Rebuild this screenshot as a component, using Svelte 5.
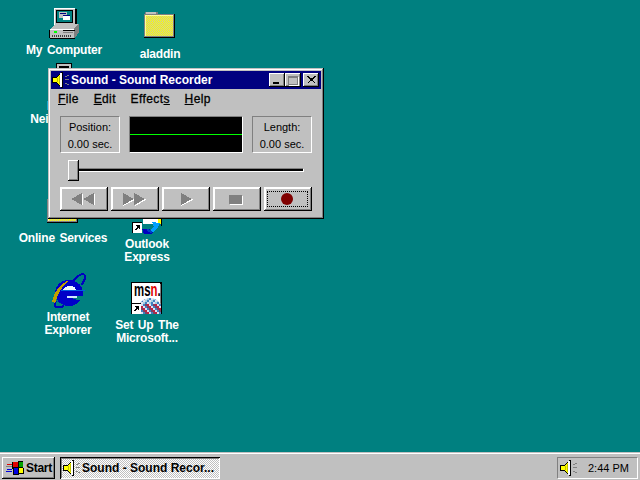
<script lang="ts">
  const icons = [
    { id: "computer", x: 24, y: 7, size: [32, 32], gap: 5, shift: 0, label: ["My Computer"] },
    { id: "folder", x: 120, y: 10, size: [34, 30], gap: 8, shift: 0, label: ["aladdin"] },
    { id: "network", x: 24, y: 62, size: [32, 32], gap: 6, shift: 6, label: ["Network", "Neighborhood"] },
    { id: "folder", x: 23, y: 195, size: [34, 30], gap: 7, shift: 0, label: ["Online Services"] },
    { id: "outlook", x: 107, y: 204, size: [32, 32], gap: 2, shift: 0, label: ["Outlook", "Express"] },
    { id: "ie", x: 28, y: 273, size: [36, 36], gap: 2, shift: 0, label: ["Internet", "Explorer"] },
    { id: "msn", x: 107, y: 281, size: [34, 34], gap: 4, shift: 0, label: ["Set Up The", "Microsoft..."] }
  ];

  const transport = [
    { id: "rewind", focus: false },
    { id: "forward", focus: false },
    { id: "play", focus: false },
    { id: "stop", focus: false },
    { id: "record", focus: true }
  ];

  const menus = [
    { before: "", key: "F", after: "ile" },
    { before: "", key: "E", after: "dit" },
    { before: "Effect", key: "s", after: "" },
    { before: "", key: "H", after: "elp" }
  ];

  // little coloured squares for the msn globe
  const mosaicColors = ["#4080c0", "#a0d0e0", "#e0e0f0", "#202080", "#c02040", "#208060", "#804060", "#6040a0"];
  const mosaic: { x: number; y: number; c: string }[] = [];
  for (let y = 17; y < 32; y += 2) {
    for (let x = 9; x < 31; x += 2) {
      const upper = y < 23;
      const n = (x * 7 + y * 13) % (upper ? 3 : 8);
      mosaic.push({ x, y, c: upper ? mosaicColors[n] : mosaicColors[(n + 2) % 8] });
    }
  }
</script>

{#snippet speaker()}
  <svg class="speaker" viewBox="0 0 18 16" shape-rendering="crispEdges" aria-hidden="true">
    <polygon points="0,5 4,5 9,0 11,0 11,16 9,16 4,11 0,11" fill="#000" />
    <polygon points="1,6 4,6 8,2 8,14 4,10 1,10" fill="#ffff00" />
    <rect x="5" y="6" width="1" height="4" fill="#c0c000" />
    <rect x="7" y="4" width="1" height="8" fill="#c0c000" />
    <rect x="8" y="1" width="2" height="14" fill="#fff" />
    <rect x="13" y="7" width="4" height="1" fill="#808080" />
    <rect x="13" y="4" width="2" height="1" fill="#808080" />
    <rect x="15" y="3" width="2" height="1" fill="#808080" />
    <rect x="13" y="11" width="2" height="1" fill="#808080" />
    <rect x="15" y="12" width="2" height="1" fill="#808080" />
  </svg>
{/snippet}

{#snippet shortcut(x: number, y: number)}
  <rect x={x} y={y} width="10" height="11" fill="#fff" />
  <rect x={x} y={y} width="10" height="1" fill="#000" />
  <rect x={x} y={y} width="1" height="11" fill="#000" />
  <polygon points={`${x + 3},${y + 3} ${x + 8},${y + 3} ${x + 8},${y + 8} ${x + 6},${y + 6} ${x + 4},${y + 9} ${x + 3},${y + 8} ${x + 5},${y + 5}`} fill="#000" />
{/snippet}

{#snippet icon(id: string, size: number[])}
  <svg width={size[0]} height={size[1]} viewBox={`0 0 ${size[0]} ${size[1]}`} shape-rendering="crispEdges" aria-hidden="true">
    <defs>
      <pattern id="dither" width="2" height="2" patternUnits="userSpaceOnUse">
        <rect width="2" height="2" fill="#ffff00" />
        <rect width="1" height="1" fill="#c8c8a0" />
        <rect x="1" y="1" width="1" height="1" fill="#c8c8a0" />
      </pattern>
      <clipPath id="dome"><circle cx="20" cy="29" r="12" /></clipPath>
    </defs>
    {#if id === "computer"}
      <rect x="7" y="2" width="22" height="17" fill="#000" />
      <rect x="6" y="1" width="21" height="17" fill="#c0c0c0" />
      <rect x="6" y="1" width="21" height="1" fill="#fff" />
      <rect x="6" y="1" width="1" height="17" fill="#fff" />
      <rect x="8" y="3" width="17" height="13" fill="#000" />
      <rect x="9" y="4" width="15" height="11" fill="#008080" />
      <rect x="11" y="5" width="8" height="6" fill="#c0c0c0" />
      <rect x="12" y="6" width="6" height="1" fill="#000080" />
      <rect x="15" y="8" width="7" height="5" fill="#fff" />
      <rect x="15" y="8" width="7" height="1" fill="#000080" />
      <polygon points="7,17 30,17 26,22 3,22" fill="#c0c0c0" />
      <polygon points="26,22 30,17 31,17 31,25 27,31 26,31" fill="#808080" />
      <rect x="2" y="22" width="24" height="9" fill="#c0c0c0" />
      <rect x="2" y="22" width="24" height="1" fill="#fff" />
      <rect x="2" y="31" width="25" height="1" fill="#000" />
      <rect x="1" y="23" width="1" height="8" fill="#000" />
      <rect x="6" y="24" width="3" height="2" fill="#00ff00" />
      <rect x="15" y="23" width="12" height="1" fill="#000" />
      <rect x="15" y="25" width="10" height="1" fill="#808080" />
      {#each [4, 6, 8, 10, 12, 14, 16, 18, 20, 22] as k}
        <rect x={k} y="28" width="1" height="2" fill="#404040" />
      {/each}
    {:else if id === "folder"}
      <rect x="2" y="2" width="13" height="3" fill="#808080" />
      <rect x="3" y="2" width="10" height="2" fill="#c0c0c0" />
      <rect x="1" y="4" width="31" height="24" fill="#000" />
      <rect x="1" y="4" width="30" height="23" fill="#808080" />
      <rect x="2" y="5" width="28" height="21" fill="url(#dither)" />
      <rect x="2" y="5" width="28" height="1" fill="#ffff99" />
      <rect x="2" y="5" width="1" height="21" fill="#ffff99" />
    {:else if id === "network"}
      <rect x="8" y="1" width="16" height="16" fill="#000" />
      <rect x="9" y="2" width="14" height="14" fill="#c0c0c0" />
      <rect x="11" y="4" width="10" height="3" fill="#000" />
    {:else if id === "outlook"}
      <rect x="12" y="15" width="16" height="5" fill="#fff" />
      <rect x="27" y="15" width="3" height="5" fill="#ffff00" />
      <rect x="30" y="15" width="1" height="7" fill="#000" />
      <polygon points="11,25 18,25 22,28 20,30 13,30" fill="#0000c0" />
      <polygon points="21,18 29,19 26,25 22,28 19,26 23,23" fill="#00a0ff" />
      <polygon points="16,25 19,26 22,28 20,29 16,27" fill="#0040c0" />
      {@render shortcut(1, 18)}
    {:else if id === "ie"}
      <path d="M23 8 C 29 1, 35 -1, 35 4 C 35 7, 33 10, 31 12" fill="none" stroke="#0000c0" stroke-width="2" />
      <path d="M6 28 C 2 34, 7 36, 14 33" fill="none" stroke="#0000c0" stroke-width="2" />
      <ellipse cx="19" cy="20" rx="14" ry="13" fill="#0000c8" />
      <path d="M2 29 C 4 19, 9 12, 17 8 L 18 9 C 12 13, 8 20, 5 30 Z" fill="#c0a000" />
      <path d="M13 17 C 14 12, 25 11, 26 17 Z" fill="#f0f8ff" />
      <rect x="11" y="17" width="24" height="1" fill="#0060e0" />
      <path d="M17 23 L 34 23 L 34 27 L 27 27 C 25 25, 20 25, 17 25 Z" fill="#008080" />
      <rect x="17" y="23" width="10" height="2" fill="#d0e8ff" />
    {:else if id === "msn"}
      <rect x="1" y="1" width="31" height="32" fill="#000" />
      <rect x="2" y="2" width="28" height="30" fill="#fff" />
      <rect x="30" y="3" width="1" height="29" fill="#808080" />
      <text class="msn-text" transform="translate(4 15) scale(.6 1)"><tspan fill="#000">ms</tspan><tspan fill="#e00000">n</tspan><tspan fill="#000">.</tspan></text>
      <g clip-path="url(#dome)">
        {#each mosaic as m}
          <rect x={m.x} y={m.y} width="2" height="2" fill={m.c} />
        {/each}
      </g>
      {@render shortcut(1, 22)}
    {/if}
  </svg>
{/snippet}

{#snippet glyph(id: string)}
  {#if id === "rewind"}
    <svg class="glyph nudge" width="24" height="13" viewBox="0 0 24 13" shape-rendering="crispEdges" aria-hidden="true">
      <polygon points="23,1 23,12 24,12 24,0" fill="#fff" />
      <polygon points="11,1 11,12 12,12 12,0" fill="#fff" />
      <polygon points="11,0 11,12 0,6" fill="#808080" />
      <polygon points="23,0 23,12 12,6" fill="#808080" />
    </svg>
  {:else if id === "forward"}
    <svg class="glyph nudge" width="24" height="13" viewBox="0 0 24 13" shape-rendering="crispEdges" aria-hidden="true">
      <polygon points="1,13 13,7 12,6 1,12" fill="#fff" />
      <polygon points="13,13 24,7 23,6 13,12" fill="#fff" />
      <polygon points="1,0 1,12 12,6" fill="#808080" />
      <polygon points="12,0 12,12 23,6" fill="#808080" />
    </svg>
  {:else if id === "play"}
    <svg class="glyph" width="13" height="13" viewBox="0 0 13 13" shape-rendering="crispEdges" aria-hidden="true">
      <polygon points="1,13 13,7 12,6 1,12" fill="#fff" />
      <polygon points="1,0 1,12 12,6" fill="#808080" />
    </svg>
  {:else if id === "stop"}
    <span class="stop-mark"></span>
  {:else}
    <span class="record-mark"></span>
  {/if}
{/snippet}

<div class="screen">
  <main class="desktop">
    {#each icons as item}
      <div class="desk-icon" style={`left:${item.x}px;top:${item.y}px;gap:${item.gap}px`}>
        {@render icon(item.id, item.size)}
        <span class="desk-label" style={`translate:${item.shift}px 0`}>
          {#each item.label as line}
            <span>{line}</span>
          {/each}
        </span>
      </div>
    {/each}

    <section class="window">
      <header class="titlebar">
        {@render speaker()}
        <span class="title">Sound - Sound Recorder</span>
        <div class="caption-buttons">
          <span class="caption-btn"><i class="min"></i></span>
          <span class="caption-btn disabled"><i class="max"></i></span>
          <span class="caption-btn close">
            <svg width="9" height="8" viewBox="0 0 9 8" shape-rendering="crispEdges" aria-hidden="true">
              <path d="M0 0h2v1h1v1h3v-1h1v-1h2v1h-1v1h-1v1h-1v2h1v1h1v1h1v0h-2v-1h-1v-1h-3v1h-1v1h-2v0h1v-1h1v-1h1v-2h-1v-1h-1v-1h-1z" fill="#000" />
            </svg>
          </span>
        </div>
      </header>

      <nav class="menubar">
        {#each menus as menu}
          <span class="menu-item">{menu.before}<u>{menu.key}</u>{menu.after}</span>
        {/each}
      </nav>

      <div class="readout">
        <div class="panel"><span>Position:</span><span>0.00 sec.</span></div>
        <div class="scope"><span class="trace"></span></div>
        <div class="panel"><span>Length:</span><span>0.00 sec.</span></div>
      </div>

      <div class="slider">
        <span class="thumb"></span>
        <span class="track"></span>
      </div>

      <div class="transport">
        {#each transport as btn}
          <button type="button" class="transport-btn" class:focused={btn.focus} aria-label={btn.id}>
            {@render glyph(btn.id)}
          </button>
        {/each}
      </div>
    </section>
  </main>

  <footer class="taskbar">
    <button type="button" class="start">
      <svg width="18" height="16" viewBox="0 0 18 16" shape-rendering="crispEdges" aria-hidden="true">
        <polygon points="6,2 17,1 18,14 7,15" fill="#000" />
        <rect x="7" y="2" width="5" height="5" fill="#e00000" />
        <rect x="13" y="2" width="4" height="5" fill="#00a000" />
        <rect x="8" y="8" width="4" height="6" fill="#0000e0" />
        <rect x="13" y="8" width="4" height="5" fill="#ffff00" />
        <rect x="1" y="4" width="5" height="1" fill="#e00000" />
        <rect x="0" y="6" width="6" height="1" fill="#808080" />
        <rect x="1" y="9" width="5" height="1" fill="#0000e0" />
        <rect x="0" y="11" width="6" height="1" fill="#0000e0" />
      </svg>
      <span>Start</span>
    </button>
    <button type="button" class="task">
      {@render speaker()}
      <span>Sound - Sound Recor...</span>
    </button>
    <div class="tray">
      {@render speaker()}
      <span class="clock">2:44 PM</span>
    </div>
  </footer>
</div>

<style>
  :global(body) {
    margin: 0;
    overflow: hidden;
  }

  .screen {
    display: flex;
    flex-direction: column;
    width: 640px;
    height: 480px;
    font-family: "Liberation Sans", Arial, sans-serif;
    font-size: 12px;
    color: #000;
    user-select: none;
  }

  .desktop {
    position: relative;
    flex: 1;
    background: #008080;
    overflow: hidden;
  }

  .desk-icon {
    position: absolute;
    width: 80px;
    display: flex;
    flex-direction: column;
    align-items: center;
  }

  .desk-icon svg {
    display: block;
    flex-shrink: 0;
    overflow: visible;
  }

  .desk-label {
    display: flex;
    flex-direction: column;
    align-items: center;
    color: #fff;
    font-weight: 700;
    font-size: 12px;
    line-height: 13px;
    letter-spacing: -0.2px;
    word-spacing: 1.5px;
    white-space: nowrap;
  }

  .msn-text {
    font-family: "Liberation Sans", Arial, sans-serif;
    font-weight: 700;
    font-size: 19px;
  }

  .window {
    position: absolute;
    left: 48px;
    top: 68px;
    box-sizing: border-box;
    width: 276px;
    height: 151px;
    display: flex;
    flex-direction: column;
    padding: 3px;
    background: #c0c0c0;
    box-shadow:
      inset -1px -1px #000,
      inset 1px 1px #c0c0c0,
      inset -2px -2px #808080,
      inset 2px 2px #fff;
  }

  .titlebar {
    display: flex;
    align-items: center;
    height: 18px;
    padding-left: 1px;
    background: #000080;
    color: #fff;
    font-weight: 700;
  }

  .speaker {
    width: 18px;
    height: 16px;
    flex-shrink: 0;
  }

  .title {
    margin-left: 1px;
    white-space: nowrap;
  }

  .caption-buttons {
    display: flex;
    margin-left: auto;
    margin-right: 2px;
  }

  .caption-btn {
    box-sizing: border-box;
    display: flex;
    align-items: center;
    justify-content: center;
    position: relative;
    width: 16px;
    height: 14px;
    background: #c0c0c0;
    box-shadow:
      inset -1px -1px #000,
      inset 1px 1px #fff,
      inset -2px -2px #808080;
  }

  .caption-btn.close {
    margin-left: 2px;
  }

  .min {
    position: absolute;
    left: 4px;
    bottom: 3px;
    width: 6px;
    height: 2px;
    background: #000;
  }

  .max {
    display: block;
    box-sizing: border-box;
    width: 10px;
    height: 9px;
    border: 1px solid #808080;
    border-top-width: 2px;
    box-shadow: 1px 1px #fff;
  }

  .menubar {
    display: flex;
    gap: 14.7px;
    height: 20px;
    align-items: center;
    padding: 0 0 0 7px;
    font-size: 12px;
    -webkit-text-stroke: 0.3px #000;
    letter-spacing: 0.4px;
  }

  .readout {
    display: flex;
    gap: 9px;
    margin: 7px 0 0 9px;
    width: 252px;
    height: 37px;
  }

  .panel {
    box-sizing: border-box;
    flex: 0 0 60px;
    display: flex;
    flex-direction: column;
    align-items: center;
    justify-content: center;
    gap: 4px;
    padding-top: 2px;
    border: 1px solid;
    border-color: #808080 #fff #fff #808080;
    font-size: 11px;
    line-height: 13px;
  }

  .scope {
    box-sizing: border-box;
    flex: 1;
    display: flex;
    align-items: center;
    background: #000;
    border: 1px solid;
    border-color: #808080 #fff #fff #808080;
  }

  .trace {
    display: block;
    width: 100%;
    height: 1px;
    background: #00ff00;
  }

  .slider {
    display: flex;
    margin: 7px 0 0 17px;
    height: 21px;
  }

  .thumb {
    box-sizing: border-box;
    flex: 0 0 11px;
    height: 21px;
    background: #c0c0c0;
    box-shadow:
      inset -1px -1px #000,
      inset 1px 1px #fff,
      inset -2px -2px #808080;
  }

  .track {
    box-sizing: border-box;
    width: 225px;
    height: 4px;
    margin-top: 8px;
    background: #000;
    border-top: 1px solid #808080;
    border-bottom: 1px solid #fff;
    border-right: 1px solid #fff;
  }

  .transport {
    display: flex;
    gap: 3px;
    margin: 6px 0 0 9px;
  }

  .transport-btn {
    box-sizing: border-box;
    display: flex;
    align-items: center;
    justify-content: center;
    position: relative;
    width: 48px;
    height: 24px;
    padding: 0;
    border: 0;
    background: #c0c0c0;
    box-shadow:
      inset -1px -1px #000,
      inset 1px 1px #fff,
      inset -2px -2px #808080,
      inset 2px 2px #fff;
  }

  .transport-btn.focused::after {
    content: "";
    position: absolute;
    inset: 4px 4px 4px 3px;
    border: 1px dotted #000;
  }

  .glyph {
    display: block;
  }

  .glyph.nudge {
    margin-right: 3px;
  }

  .stop-mark {
    display: block;
    width: 13px;
    height: 9px;
    margin-right: 3px;
    background: #808080;
    box-shadow: 1px 1px #fff;
  }

  .record-mark {
    display: block;
    width: 12px;
    height: 12px;
    margin-right: 2px;
    border-radius: 50%;
    background: #800000;
  }

  .taskbar {
    box-sizing: border-box;
    flex: 0 0 28px;
    display: flex;
    align-items: center;
    gap: 5px;
    padding: 2px 2px 0 2px;
    background: #c0c0c0;
    border-top: 1px solid #c0c0c0;
    box-shadow: inset 0 1px #fff;
  }

  .start {
    box-sizing: border-box;
    display: flex;
    align-items: center;
    gap: 2px;
    width: 53px;
    height: 22px;
    padding: 0 0 0 4px;
    border: 0;
    background: #c0c0c0;
    font: 700 12px "Liberation Sans", Arial, sans-serif;
    letter-spacing: -0.3px;
    box-shadow:
      inset -1px -1px #000,
      inset 1px 1px #fff,
      inset -2px -2px #808080;
  }

  .task {
    box-sizing: border-box;
    display: flex;
    align-items: center;
    gap: 1px;
    width: 160px;
    height: 22px;
    padding: 0 0 0 3px;
    border: 0;
    background-color: #fff;
    background-image: conic-gradient(#c0c0c0 25%, #fff 0 50%, #c0c0c0 0 75%, #fff 0);
    background-size: 2px 2px;
    font: 700 12px "Liberation Sans", Arial, sans-serif;
    white-space: nowrap;
    box-shadow:
      inset 1px 1px #000,
      inset -1px -1px #fff,
      inset 2px 2px #808080;
  }

  .tray {
    box-sizing: border-box;
    display: flex;
    align-items: center;
    margin-left: auto;
    width: 81px;
    height: 22px;
    padding: 0 0 0 2px;
    border: 1px solid;
    border-color: #808080 #fff #fff #808080;
  }

  .clock {
    margin-left: 10px;
    font-size: 11px;
    white-space: nowrap;
  }
</style>
